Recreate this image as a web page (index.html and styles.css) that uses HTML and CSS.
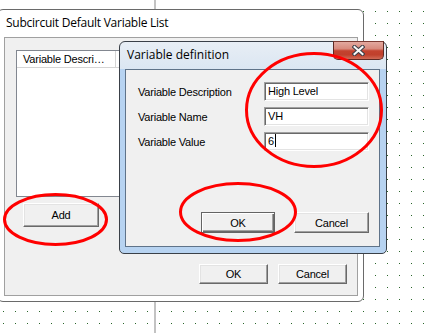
FILE: index.html
```html
<!DOCTYPE html>
<html lang="en">
<head>
  <meta charset="UTF-8">
  <title>Subcircuit Default Variable List</title>
  <link rel="stylesheet" href="styles.css">
</head>
<body>

  <!-- schematic sheet behind the dialogs -->
  <svg class="sheet" width="426" height="333">
    <defs>
      <pattern id="dots" x="3" y="11" width="12" height="12" patternUnits="userSpaceOnUse">
        <rect width="1" height="1" fill="#2a662a"/>
      </pattern>
    </defs>
    <rect width="426" height="333" fill="url(#dots)"/>
    <rect x="154" y="0" width="2" height="333" fill="#c3c3c3"/>
  </svg>

  <div class="window" id="var-list">
    <div class="window-title">Subcircuit Default Variable List</div>
    <div class="panel">
      <div class="listview">
        <div class="lv-header">
          <div class="lv-col lv-col-desc">Variable Descri…</div>
          <div class="lv-col"></div>
        </div>
      </div>
      <button class="btn btn-add">Add</button>
      <div class="panel-footer">
        <button class="btn btn-wide">OK</button>
        <button class="btn btn-wide">Cancel</button>
      </div>
    </div>
  </div>

  <div class="dialog" id="var-def">
    <div class="dialog-title">Variable definition</div>
    <div class="close-btn">
      <svg width="13" height="11" viewBox="0 0 13 11">
        <path d="M2.5 2 L10.5 9 M10.5 2 L2.5 9" stroke="#3d4048" stroke-width="4.2" stroke-linecap="square" fill="none"/>
        <path d="M2.5 2 L10.5 9 M10.5 2 L2.5 9" stroke="#fafafa" stroke-width="2" stroke-linecap="square" fill="none"/>
      </svg>
    </div>
    <div class="client">
      <div class="fields">
        <div class="field">
          <span class="field-label">Variable Description</span>
          <div class="textbox">High Level</div>
        </div>
        <div class="field">
          <span class="field-label">Variable Name</span>
          <div class="textbox">VH</div>
        </div>
        <div class="field">
          <span class="field-label">Variable Value</span>
          <div class="textbox">6<span class="caret"></span></div>
        </div>
      </div>
      <div class="dialog-buttons">
        <button class="btn btn-default">OK</button>
        <button class="btn btn-cancel">Cancel</button>
      </div>
    </div>
  </div>

  <!-- red annotation marks -->
  <svg class="marks" width="426" height="333">
    <ellipse cx="314" cy="110" rx="67.5" ry="56.5"/>
    <ellipse cx="238" cy="212" rx="57.5" ry="28.5"/>
    <ellipse cx="55.5" cy="219.5" rx="51" ry="25"/>
  </svg>

</body>
</html>
```

FILE: styles.css
```css
body {
  margin: 0;
  width: 426px;
  height: 333px;
  position: relative;
  overflow: hidden;
  background: #fff;
  font-family: "Liberation Sans", Arial, sans-serif;
  font-size: 11px;
  letter-spacing: -0.2px;
  color: #000;
}

.sheet {
  position: absolute;
  left: 0;
  top: 0;
}

/* ---- outer window ---- */
.window {
  position: absolute;
  left: -3px;
  top: 9px;
  width: 367px;
  height: 293px;
  box-sizing: border-box;
  border: 1px solid #6a6a6a;
  border-radius: 6px;
  background: #fff;
}

.window-title {
  height: 27px;
  line-height: 25px;
  padding-left: 8px;
  font-family: "Open Sans", "Liberation Sans", sans-serif;
  font-size: 12px;
  letter-spacing: -0.25px;
  color: #000;
}

.panel {
  margin-left: 6px;
  width: 354px;
  height: 259px;
  box-sizing: border-box;
  border: 1px solid #a0a0a0;
  background: #f0f0f0;
  display: flex;
  flex-direction: column;
  align-items: flex-start;
}

.listview {
  margin: 12px 0 0 11px;
  width: 330px;
  height: 147px;
  box-sizing: border-box;
  border: 1px solid #828790;
  background: #fff;
}

.lv-header {
  display: flex;
  height: 16px;
  border-bottom: 1px solid #d5d5d5;
}

.lv-col {
  flex: 1;
  line-height: 16px;
}

.lv-col-desc {
  flex: 0 0 99px;
  box-sizing: border-box;
  padding-left: 6px;
  border-right: 1px solid #d5d5d5;
  color: #000;
}

.panel-footer {
  margin-top: auto;
  align-self: flex-end;
  margin-right: 10px;
  margin-bottom: 11px;
  display: flex;
  gap: 10px;
}

/* ---- classic buttons ---- */
.btn {
  font-family: inherit;
  font-size: 11px;
  letter-spacing: -0.2px;
  color: #000;
  padding: 0;
  box-sizing: border-box;
  background: #f0f0f0;
  border: 1px solid;
  border-color: #fff #696969 #696969 #fff;
  box-shadow: inset -1px -1px 0 #a0a0a0, inset 1px 1px 0 #e3e3e3;
}

.btn-add {
  margin: 6px 0 0 18px;
  width: 76px;
  height: 24px;
}

.btn-wide {
  width: 69px;
  height: 20px;
}

/* ---- Variable definition dialog ---- */
.dialog {
  position: absolute;
  left: 119px;
  top: 41px;
  width: 268px;
  height: 213px;
  box-sizing: border-box;
  border: 1px solid #3a4048;
  border-radius: 6px 6px 5px 5px;
  background: linear-gradient(#e8eef5 0, #dbe6f2 27px, #b7d3f1 27px);
}

.dialog-title {
  height: 27px;
  line-height: 25px;
  padding-left: 7px;
  font-family: "Open Sans", "Liberation Sans", sans-serif;
  font-size: 12px;
  letter-spacing: 0;
  color: #000;
}

.close-btn {
  position: absolute;
  top: -1px;
  right: 2px;
  width: 51px;
  height: 19px;
  box-sizing: border-box;
  border: 1px solid #5e2a24;
  border-top-color: #7c3b33;
  border-radius: 0 0 5px 5px;
  background: linear-gradient(#e3a99f 0%, #d88a7d 40%, #c4432f 52%, #c0402c 75%, #d06a55 100%);
  display: flex;
  align-items: center;
  justify-content: center;
}

.client {
  margin: 0 6px 0 5px;
  height: 178px;
  box-sizing: border-box;
  border: 1px solid #5f7389;
  background: #f0f0f0;
  display: flex;
  flex-direction: column;
}

.fields {
  margin-top: 12px;
  padding: 0 10px 0 12px;
  display: flex;
  flex-direction: column;
  gap: 6px;
}

.field {
  display: flex;
  align-items: center;
  justify-content: space-between;
  height: 19px;
}

.textbox {
  width: 105px;
  height: 19px;
  box-sizing: border-box;
  padding-left: 3px;
  line-height: 17px;
  background: #fff;
  border: 1px solid;
  border-color: #a0a0a0 #fff #fff #a0a0a0;
  box-shadow: inset 1px 1px 0 #696969, inset -1px -1px 0 #e3e3e3;
}

.caret {
  display: inline-block;
  width: 1px;
  height: 13px;
  margin-left: 1px;
  vertical-align: -2px;
  background: #000;
}

.dialog-buttons {
  margin-top: auto;
  margin-bottom: 13px;
  align-self: flex-end;
  margin-right: 10px;
  display: flex;
  gap: 19px;
}

.btn-default {
  width: 74px;
  height: 21px;
  border-color: #646464;
  box-shadow: inset 1px 1px 0 #fff, inset -1px -1px 0 #696969, inset -2px -2px 0 #a0a0a0;
}

.btn-cancel {
  width: 75px;
  height: 21px;
}

/* ---- annotation ---- */
.marks {
  position: absolute;
  left: 0;
  top: 0;
  pointer-events: none;
}

.marks ellipse {
  fill: none;
  stroke: #f00;
  stroke-width: 3;
}
```
